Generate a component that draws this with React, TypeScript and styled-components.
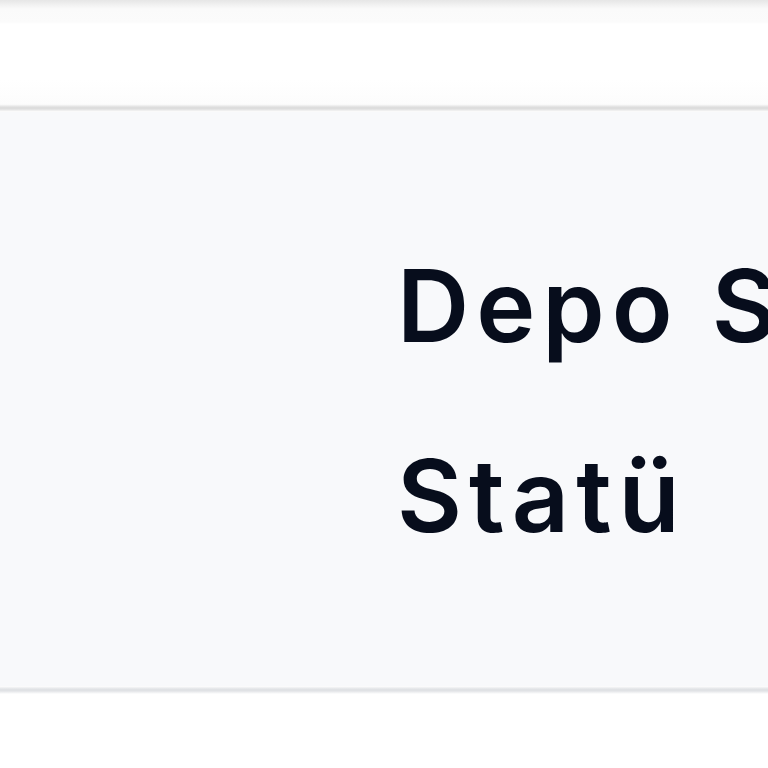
import React from "react";
import styled, { createGlobalStyle } from "styled-components";

const Global = createGlobalStyle`
  html, body { margin: 0; padding: 0; background: #ffffff; }
  body { font-family: Inter, "Noto Sans", sans-serif; overflow: hidden; }
`;

const Page = styled.div`
  width: 768px;
  height: 768px;
  display: flex;
  flex-direction: column;
  background: #ffffff;
`;

const TopShade = styled.div`
  height: 24px;
  flex: none;
  background: linear-gradient(#e6e6e6 0px, #f6f6f6 7px, #fafafa 9px, #fbfbfb 22px, #ffffff 24px);
`;

const Header = styled.div`
  height: 80px;
  flex: none;
  background: linear-gradient(#ffffff 0, #ffffff 70%, #fcfcfc 100%);
`;

const Divider = styled.div<{ $tone: string }>`
  height: 8px;
  flex: none;
  background: linear-gradient(
    transparent 0,
    ${(p) => p.$tone} 40%,
    ${(p) => p.$tone} 60%,
    transparent 100%
  );
`;

const Band = styled.div`
  height: 574px;
  flex: none;
  background: #f8f9fb;
  padding: 99px 0 0 397px;
  box-sizing: border-box;
  overflow: hidden;
`;

const Label = styled.div`
  font-family: Inter, "Noto Sans", sans-serif;
  font-size: 100px;
  line-height: 190px;
  font-weight: 600;
  color: #070d1c;
  white-space: nowrap;
  letter-spacing: 7px;
`;

const Footer = styled.div`
  flex: 1;
  background: #ffffff;
`;

export default function App() {
  return (
    <Page>
      <Global />
      <TopShade />
      <Header />
      <Divider $tone="#dddddd" />
      <Band>
        <Label>Depo Stok</Label>
        <Label>Statü</Label>
      </Band>
      <Divider $tone="#e0e2e5" />
      <Footer />
    </Page>
  );
}
